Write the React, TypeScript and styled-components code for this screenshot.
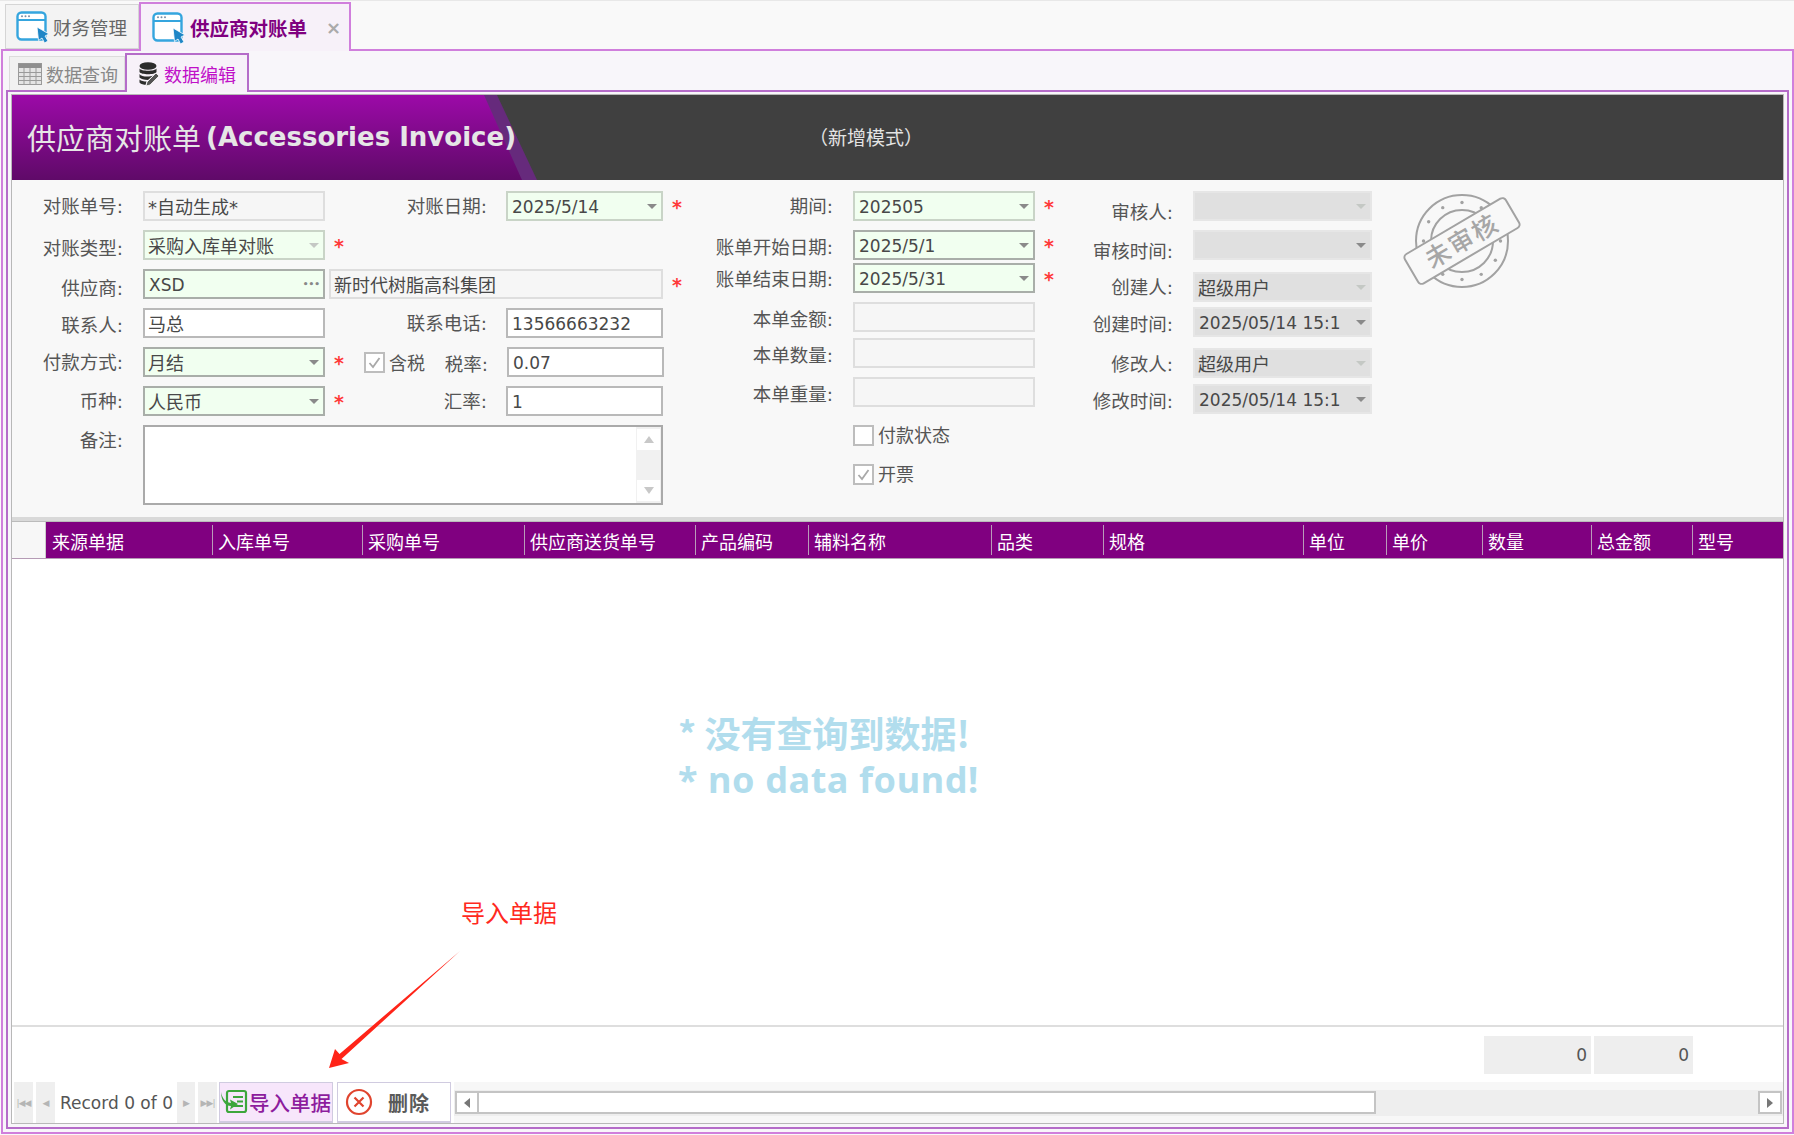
import React from 'react'
import styled, { createGlobalStyle } from 'styled-components'

const FONT = `"DejaVu Sans", "Noto Sans CJK SC", sans-serif`

const GlobalStyle = createGlobalStyle`
    html, body {
        margin: 0;
        padding: 0;
        background: #f9f9f9;
    }
    body {
        font-family: ${FONT};
        color: #444;
    }
    * {
        box-sizing: border-box;
    }
`

const Page = styled.div`
    width: 1794px;
    height: 1135px;
    display: flex;
    flex-direction: column;
    overflow: hidden;
    border-top: 1px solid #e8e8e8;
`

const TopBar = styled.div`
    height: 48px;
    flex: none;
    display: flex;
    align-items: flex-end;
    padding-left: 5px;
`

const TopTab = styled.div<{ $active?: boolean }>`
    display: flex;
    align-items: center;
    height: ${p => (p.$active ? 49 : 45)}px;
    width: ${p => (p.$active ? 212 : 134)}px;
    padding-left: ${p => (p.$active ? 11 : 10)}px;
    margin-bottom: ${p => (p.$active ? -2 : 0)}px;
    background: ${p => (p.$active ? '#f7f1f9' : '#f3f3f3')};
    border: ${p => (p.$active ? '2px solid #d07fdc' : '1px solid #d5d5d5')};
    border-bottom: ${p => (p.$active ? 'none' : '1px solid #d5d5d5')};
    position: relative;
    z-index: 2;
`

const TopTabText = styled.span<{ $active?: boolean }>`
    margin-left: ${p => (p.$active ? 4 : 3)}px;
    font-size: ${p => (p.$active ? 19.5 : 18.5)}px;
    font-weight: ${p => (p.$active ? 700 : 400)};
    color: ${p => (p.$active ? '#800080' : '#666')};
    white-space: nowrap;
`

const CloseMark = styled.span`
    margin-left: 19px;
    font-size: 18px;
    font-weight: 700;
    color: #aaa;
`

const OuterPanel = styled.div`
    flex: 1;
    min-height: 0;
    margin: 0 0 1px 1px;
    padding: 0 3px 3px 3px;
    border: 2px solid #d07fdc;
    display: flex;
    flex-direction: column;
    background: #f8f6fa;
`

const InnerTabs = styled.div`
    height: 39px;
    flex: none;
    display: flex;
    align-items: flex-end;
    padding-left: 3px;
`

const InnerTab = styled.div<{ $active?: boolean }>`
    display: flex;
    align-items: center;
    height: ${p => (p.$active ? 39 : 34)}px;
    width: ${p => (p.$active ? 124 : 116)}px;
    padding-left: ${p => (p.$active ? 11 : 8)}px;
    margin-bottom: ${p => (p.$active ? -2 : 0)}px;
    background: ${p => (p.$active ? '#f7f1f9' : '#f1f1f1')};
    border: ${p => (p.$active ? '2px solid #b56cc9' : '1px solid #dcdcdc')};
    border-bottom: none;
    position: relative;
    z-index: 2;
`

const InnerTabText = styled.span<{ $active?: boolean }>`
    margin-left: ${p => (p.$active ? 5 : 4)}px;
    font-size: 18px;
    color: ${p => (p.$active ? '#c010c8' : '#888')};
    white-space: nowrap;
`

const InnerPanel = styled.div`
    flex: 1;
    min-height: 0;
    padding: 2px 3px 3px 3px;
    border: 2px solid #b56cc9;
    display: flex;
    flex-direction: column;
    background: #f8f6fa;
`

const Frame = styled.div`
    flex: 1;
    min-height: 0;
    border: 1px solid #b8b8b8;
    display: flex;
    flex-direction: column;
    background: #fff;
`

const Banner = styled.div`
    height: 85px;
    flex: none;
    display: flex;
    align-items: center;
    background: #404040;
`

const TitleBlock = styled.div`
    width: 525px;
    height: 100%;
    flex: none;
    padding: 0 0 2px 15px;
    display: flex;
    align-items: center;
    position: relative;

    &::before,
    &::after {
        content: '';
        position: absolute;
        inset: 0;
    }

    &::before {
        background: #662a7c;
        clip-path: polygon(0 0, 485px 0, 100% 100%, 0 100%);
    }

    &::after {
        background: linear-gradient(180deg, #9c0aa8 0%, #5f0a68 100%);
        clip-path: polygon(0 0, 472px 0, 510px 100%, 0 100%);
    }
`

const TitleCn = styled.span`
    position: relative;
    z-index: 1;
    font-family: "Noto Sans CJK SC", sans-serif;
    font-size: 29px;
    color: #e6e6e6;
    white-space: nowrap;
`

const TitleEn = styled.span`
    position: relative;
    z-index: 1;
    margin-left: 5px;
    font-family: "DejaVu Sans", sans-serif;
    font-size: 26px;
    font-weight: 700;
    color: #e6e6e6;
    white-space: nowrap;
`

const ModeText = styled.span`
    margin: 0 0 2px 272px;
    font-family: "Noto Sans CJK SC", sans-serif;
    font-size: 19px;
    color: #e4e4e4;
`

const FormArea = styled.div`
    height: 337px;
    flex: none;
    display: flex;
    padding-top: 11px;
    background: #f8f8f8;
`

const Column = styled.div<{ $w: number }>`
    width: ${p => p.$w}px;
    flex: none;
    display: flex;
    flex-direction: column;
`

const Row = styled.div<{ $top?: number }>`
    display: flex;
    align-items: flex-start;
    height: 30px;
    margin-top: ${p => p.$top ?? 0}px;
`

const MemoRow = styled(Row)`
    height: 80px;
`

const Label = styled.span<{ $w: number; $dy?: number; $gap?: number }>`
    width: ${p => p.$w}px;
    flex: none;
    margin-top: ${p => p.$dy ?? 0}px;
    margin-right: ${p => p.$gap ?? 20}px;
    text-align: right;
    font-size: 18.5px;
    line-height: 32px;
    color: #555;
    white-space: nowrap;
`

const toneStyles = {
    green: { bg: '#f1fff0', border: '#c9d4c7' },
    greenStrong: { bg: '#f1fff0', border: '#a9aea9' },
    read: { bg: '#f6f6f6', border: '#dedede' },
    white: { bg: '#fff', border: '#b9b9b9' },
    gray: { bg: '#e0e0e0', border: '#e6e6e6' },
}

type Tone = keyof typeof toneStyles

const Field = styled.div<{ $w: number; $tone: Tone; $ml?: number }>`
    width: ${p => p.$w}px;
    height: 30px;
    flex: none;
    margin-left: ${p => p.$ml ?? 0}px;
    padding: 0 3px;
    display: flex;
    align-items: center;
    justify-content: space-between;
    background: ${p => toneStyles[p.$tone].bg};
    border: 2px solid ${p => toneStyles[p.$tone].border};
    font-size: 18px;
    color: #484848;
`

const FieldText = styled.span`
    min-width: 0;
    flex: 1;
    overflow: hidden;
    white-space: nowrap;
`

const FieldNum = styled(FieldText)`
    padding: 2px 0 0 1px;
    font-size: 17px;
`

const Arrow = styled.i<{ $pale?: boolean }>`
    width: 0;
    height: 0;
    flex: none;
    margin: 0 1px 0 8px;
    border-left: 5px solid transparent;
    border-right: 5px solid transparent;
    border-top: 5px solid ${p => (p.$pale ? '#c4c8c4' : '#8a8a8a')};
`

const Dots = styled.span`
    flex: none;
    margin-right: 0;
    font-size: 9px;
    font-weight: 700;
    letter-spacing: 0;
    color: #888;
`

const Star = styled.span`
    width: 16px;
    flex: none;
    margin-left: 9px;
    font-size: 19px;
    font-weight: 700;
    line-height: 33px;
    color: #ff3a3a;
`

const Check = styled.span`
    width: 21px;
    height: 21px;
    flex: none;
    display: flex;
    align-items: center;
    justify-content: center;
    background: #fff;
    border: 2px solid #bdbdbd;
`

const InlineCheck = styled(Check)`
    margin: 5px 0 0 14px;
`

const CheckText = styled.span<{ $ml?: number }>`
    flex: none;
    margin-left: ${p => p.$ml ?? 4}px;
    font-size: 18px;
    line-height: 33px;
    color: #555;
`

const CheckRow = styled.div<{ $top: number; $ml: number }>`
    display: flex;
    align-items: center;
    height: 21px;
    margin: ${p => p.$top}px 0 0 ${p => p.$ml}px;
`

const Memo = styled.div`
    width: 520px;
    height: 80px;
    flex: none;
    display: flex;
    justify-content: flex-end;
    background: #fff;
    border: 2px solid #aaa;
`

const MemoScroll = styled.div`
    width: 25px;
    display: flex;
    flex-direction: column;
    justify-content: space-between;
    background: #f1f1f1;
    padding: 2px 1px;
`

const MemoScrollBtn = styled.div`
    height: 21px;
    display: flex;
    align-items: center;
    justify-content: center;
    background: #fff;
`

const TriUp = styled.i<{ $down?: boolean }>`
    width: 0;
    height: 0;
    border-left: 5px solid transparent;
    border-right: 5px solid transparent;
    border-bottom: ${p => (p.$down ? 'none' : '7px solid #c8c8c8')};
    border-top: ${p => (p.$down ? '7px solid #c8c8c8' : 'none')};
`

const StampBox = styled.div`
    width: 122px;
    height: 104px;
    flex: none;
    margin: -2px 0 0 30px;
`

const Separator = styled.div`
    height: 4px;
    flex: none;
    background: #d9d9d9;
`

const GridHead = styled.div`
    height: 38px;
    flex: none;
    display: flex;
    align-items: center;
    background: #800080;
    border-top: 1px solid #bbb;
    border-bottom: 1px solid #b59bb5;
`

const RowIndicator = styled.div`
    width: 34px;
    height: 100%;
    flex: none;
    background: #f7f7f7;
    border-right: 1px solid #ccc;
`

const HeadCell = styled.div<{ $w: number; $first?: boolean }>`
    width: ${p => p.$w}px;
    height: 30px;
    flex: none;
    padding: 3px 0 0 ${p => (p.$first ? 6 : 5)}px;
    border-left: ${p => (p.$first ? 'none' : '1px solid #b99bb9')};
    font-size: 18px;
    line-height: 30px;
    color: #fff;
    white-space: nowrap;
`

const GridBody = styled.div`
    flex: 1;
    min-height: 0;
    padding: 149px 0 0 666px;
    background: #fff;
`

const NoData = styled.div`
    font-family: "Noto Sans CJK SC", sans-serif;
    font-size: 36px;
    font-weight: 700;
    line-height: 48px;
    color: #b1dded;
    white-space: pre;
`

const NoDataEn = styled(NoData)`
    font-family: "Noto Sans", "Noto Sans CJK SC", sans-serif;
    letter-spacing: 0.6px;
`

const Totals = styled.div`
    height: 57px;
    flex: none;
    display: flex;
    justify-content: flex-end;
    gap: 3px;
    padding: 9px 90px 0 0;
    border-top: 2px solid #dedede;
    background: #fff;
`

const TotalBox = styled.div<{ $w: number }>`
    width: ${p => p.$w}px;
    height: 38px;
    padding-right: 4px;
    background: #eee;
    text-align: right;
    font-size: 17px;
    line-height: 38px;
    color: #555;
`

const Navigator = styled.div`
    height: 41px;
    flex: none;
    display: flex;
    align-items: stretch;
    padding-left: 2px;
    background: #fff;
`

const NavBtn = styled.div<{ $w: number; $ml?: number }>`
    width: ${p => p.$w}px;
    flex: none;
    margin-left: ${p => p.$ml ?? 0}px;
    display: flex;
    align-items: center;
    justify-content: center;
    background: #efefef;
    color: #b5b5b5;
    font-size: 9px;
    letter-spacing: -1px;
`

const RecordText = styled.span`
    width: 122px;
    flex: none;
    padding: 1px 0 0 5px;
    font-size: 17px;
    line-height: 41px;
    color: #555;
    white-space: nowrap;
`

const ActionBtn = styled.div<{ $primary?: boolean; $w: number }>`
    width: ${p => p.$w}px;
    flex: none;
    margin-left: ${p => (p.$primary ? 2 : 4)}px;
    padding-left: ${p => (p.$primary ? 0 : 7)}px;
    display: flex;
    align-items: center;
    background: ${p => (p.$primary ? '#f7e6fb' : '#fff')};
    border: 1px solid #d0cbe0;
    border-bottom-width: 2px;
`

const ActionText = styled.span<{ $primary?: boolean }>`
    margin-left: ${p => (p.$primary ? 1 : 15)}px;
    font-family: "Noto Sans CJK SC", sans-serif;
    font-size: ${p => (p.$primary ? 20.5 : 20)}px;
    font-weight: ${p => (p.$primary ? 500 : 700)};
    letter-spacing: ${p => (p.$primary ? 0 : 1)}px;
    color: ${p => (p.$primary ? '#8d1c9d' : '#5a5a5a')};
    white-space: nowrap;
`

const ScrollArea = styled.div`
    flex: 1;
    min-width: 0;
    margin-left: 3px;
    display: flex;
    align-items: center;
    background: #f7f7f7;
`

const ScrollTrack = styled.div`
    flex: 1;
    height: 26px;
    display: flex;
    align-items: center;
    padding: 0 1px;
    background: #eee;
`

const ScrollBtn = styled.div<{ $mlAuto?: boolean }>`
    width: 24px;
    height: 23px;
    flex: none;
    margin-left: ${p => (p.$mlAuto ? 'auto' : 0)};
    display: flex;
    align-items: center;
    justify-content: center;
    background: #fff;
    border: 2px solid #c4c4c4;
`

const ScrollThumb = styled.div`
    width: 897px;
    height: 23px;
    flex: none;
    background: #fff;
    border: 2px solid #c4c4c4;
    border-left: none;
`

const TriSide = styled.i<{ $right?: boolean }>`
    width: 0;
    height: 0;
    border-top: 5px solid transparent;
    border-bottom: 5px solid transparent;
    border-right: ${p => (p.$right ? 'none' : '6px solid #777')};
    border-left: ${p => (p.$right ? '6px solid #777' : 'none')};
`

// callout drawn over the page by hand in the screenshot
const CalloutText = styled.div`
    position: absolute;
    left: 461px;
    top: 896px;
    font-family: "Noto Sans CJK SC", sans-serif;
    font-size: 24px;
    line-height: 32px;
    color: #ff2a1e;
`

const CalloutArrow = styled.svg`
    position: absolute;
    left: 320px;
    top: 945px;
`

const WindowIcon = () => (
    <svg width="34" height="32" viewBox="0 0 34 32">
        <rect x="1.5" y="1.5" width="28" height="27" rx="4" fill="#fff" stroke="#35a5de" strokeWidth="2.4" />
        <line x1="2" y1="9" x2="29" y2="9" stroke="#35a5de" strokeWidth="2" />
        <circle cx="6" cy="5.2" r="1" fill="#7a8fa8" />
        <circle cx="9.5" cy="5.2" r="1" fill="#7a8fa8" />
        <circle cx="13" cy="5.2" r="1" fill="#7a8fa8" />
        <path d="M21 16 L33 23 L29 25 L32 30 L28.5 32 L26 27 L22.5 29.5 Z" fill="#1f86c6" stroke="#fff" strokeWidth="0.8" />
    </svg>
)

const TableIcon = () => (
    <svg width="24" height="22" viewBox="0 0 24 22">
        <rect x="0.5" y="0.5" width="23" height="21" fill="#e4e4e4" stroke="#9a9a9a" />
        <rect x="0.5" y="0.5" width="23" height="4.5" fill="#8f8f8f" />
        <path d="M0 9.5H24M0 13.5H24M0 17.5H24M6 5V22M12 5V22M18 5V22" stroke="#9a9a9a" strokeWidth="1" />
    </svg>
)

const DbEditIcon = () => (
    <svg width="21" height="24" viewBox="0 0 21 24">
        <ellipse cx="10" cy="4" rx="8.5" ry="3.8" fill="#2c2c2c" />
        <path d="M1.5 6.5C3 9.5 17 9.5 18.5 6.5V10C17 13 3 13 1.5 10Z" fill="#2c2c2c" />
        <path d="M1.5 12C3 15 12 15.3 15 13.5L10 18C6 18 3 17 1.5 15.5Z" fill="#2c2c2c" />
        <path d="M1.5 17.5C3 19 6 19.6 8.5 19.6L7.5 23C4.5 22.6 2 21.5 1.5 20.5Z" fill="#2c2c2c" />
        <path d="M18 11L21 14L12 23L8 24L9 20Z" fill="#555" stroke="#fff" strokeWidth="0.8" />
    </svg>
)

const TickIcon = () => (
    <svg width="15" height="15" viewBox="0 0 15 15">
        <path d="M2.5 8L6 12L12.5 3" fill="none" stroke="#a9a9a9" strokeWidth="1.8" />
    </svg>
)

const StampIcon = () => (
    <svg width="122" height="104" viewBox="0 0 122 104">
        <circle cx="60" cy="52" r="46" fill="none" stroke="#a2a2a2" strokeWidth="2" />
        <circle cx="60" cy="52" r="31" fill="none" stroke="#a2a2a2" strokeWidth="2" />
        {[0, 30, 60, 90, 120, 150, 180, 210, 240, 270, 300, 330].map(a => (
            <circle
                key={a}
                cx={60 + 38.5 * Math.cos((a * Math.PI) / 180)}
                cy={52 + 38.5 * Math.sin((a * Math.PI) / 180)}
                r="1.7"
                fill="#a2a2a2"
            />
        ))}
        <g transform="rotate(-30.5 60 52)">
            <rect x="1.5" y="35" width="117" height="34" rx="4" fill="#f8f8f8" stroke="#a2a2a2" strokeWidth="2" />
            <text
                x="60"
                y="61"
                textAnchor="middle"
                fontSize="25"
                fontWeight="500"
                letterSpacing="2"
                fill="#a6a6a6"
                fontFamily="Noto Sans CJK SC, sans-serif"
            >
                未审核
            </text>
        </g>
    </svg>
)

const ImportIcon = () => (
    <svg width="28" height="26" viewBox="0 0 28 26">
        <rect x="7" y="2" width="19" height="21" rx="2" fill="none" stroke="#3da63c" strokeWidth="2.2" />
        <path d="M13 8H23M17 12.5H23M13 17H23" stroke="#3da63c" strokeWidth="1.8" />
        <path d="M1 3C2 9 5 13 11 14L10 10.5L18 15L10 20.5L11 17C5 17 1 11 1 3Z" fill="#3da63c" />
    </svg>
)

const DeleteIcon = () => (
    <svg width="28" height="28" viewBox="0 0 28 28">
        <circle cx="14" cy="14" r="12" fill="#fff" stroke="#e0442e" strokeWidth="2.2" />
        <path d="M9.5 9.5L18.5 18.5M18.5 9.5L9.5 18.5" stroke="#e0442e" strokeWidth="2.2" />
    </svg>
)

const columns = [
    { title: '来源单据', width: 166 },
    { title: '入库单号', width: 150 },
    { title: '采购单号', width: 162 },
    { title: '供应商送货单号', width: 171 },
    { title: '产品编码', width: 113 },
    { title: '辅料名称', width: 183 },
    { title: '品类', width: 112 },
    { title: '规格', width: 200 },
    { title: '单位', width: 83 },
    { title: '单价', width: 96 },
    { title: '数量', width: 109 },
    { title: '总金额', width: 101 },
    { title: '型号', width: 91 },
]

export default function App() {
    return (
        <Page>
            <GlobalStyle />
            <TopBar>
                <TopTab>
                    <WindowIcon />
                    <TopTabText>财务管理</TopTabText>
                </TopTab>
                <TopTab $active>
                    <WindowIcon />
                    <TopTabText $active>供应商对账单</TopTabText>
                    <CloseMark>×</CloseMark>
                </TopTab>
            </TopBar>

            <OuterPanel>
                <InnerTabs>
                    <InnerTab>
                        <TableIcon />
                        <InnerTabText>数据查询</InnerTabText>
                    </InnerTab>
                    <InnerTab $active>
                        <DbEditIcon />
                        <InnerTabText $active>数据编辑</InnerTabText>
                    </InnerTab>
                </InnerTabs>

                <InnerPanel>
                    <Frame>
                        <Banner>
                            <TitleBlock>
                                <TitleCn>供应商对账单</TitleCn>
                                <TitleEn>(Accessories Invoice)</TitleEn>
                            </TitleBlock>
                            <ModeText>（新增模式）</ModeText>
                        </Banner>

                        <FormArea>
                            <Column $w={678}>
                                <Row>
                                    <Label $w={111}>对账单号:</Label>
                                    <Field $w={182} $tone="read"><FieldText>*自动生成*</FieldText></Field>
                                    <Label $w={162} $gap={19}>对账日期:</Label>
                                    <Field $w={157} $tone="green">
                                        <FieldNum>2025/5/14</FieldNum>
                                        <Arrow />
                                    </Field>
                                    <Star>*</Star>
                                </Row>
                                <Row $top={9}>
                                    <Label $w={111} $dy={3}>对账类型:</Label>
                                    <Field $w={182} $tone="green">
                                        <FieldText>采购入库单对账</FieldText>
                                        <Arrow $pale />
                                    </Field>
                                    <Star>*</Star>
                                </Row>
                                <Row $top={9}>
                                    <Label $w={111} $dy={4}>供应商:</Label>
                                    <Field $w={182} $tone="greenStrong">
                                        <FieldNum>XSD</FieldNum>
                                        <Dots>•••</Dots>
                                    </Field>
                                    <Field $w={334} $ml={4} $tone="read"><FieldText>新时代树脂高科集团</FieldText></Field>
                                    <Star>*</Star>
                                </Row>
                                <Row $top={9}>
                                    <Label $w={111} $dy={2}>联系人:</Label>
                                    <Field $w={182} $tone="white"><FieldText>马总</FieldText></Field>
                                    <Label $w={162} $gap={19}>联系电话:</Label>
                                    <Field $w={157} $tone="white"><FieldNum>13566663232</FieldNum></Field>
                                </Row>
                                <Row $top={9}>
                                    <Label $w={111}>付款方式:</Label>
                                    <Field $w={182} $tone="greenStrong">
                                        <FieldText>月结</FieldText>
                                        <Arrow />
                                    </Field>
                                    <Star>*</Star>
                                    <InlineCheck><TickIcon /></InlineCheck>
                                    <CheckText>含税</CheckText>
                                    <Label $w={63} $dy={2} $gap={19}>税率:</Label>
                                    <Field $w={157} $tone="white"><FieldNum>0.07</FieldNum></Field>
                                </Row>
                                <Row $top={9}>
                                    <Label $w={111}>币种:</Label>
                                    <Field $w={182} $tone="greenStrong">
                                        <FieldText>人民币</FieldText>
                                        <Arrow />
                                    </Field>
                                    <Star>*</Star>
                                    <Label $w={137} $gap={19}>汇率:</Label>
                                    <Field $w={157} $tone="white"><FieldNum>1</FieldNum></Field>
                                </Row>
                                <MemoRow $top={9}>
                                    <Label $w={111}>备注:</Label>
                                    <Memo>
                                        <MemoScroll>
                                            <MemoScrollBtn><TriUp /></MemoScrollBtn>
                                            <MemoScrollBtn><TriUp $down /></MemoScrollBtn>
                                        </MemoScroll>
                                    </Memo>
                                </MemoRow>
                            </Column>

                            <Column $w={370}>
                                <Row>
                                    <Label $w={143}>期间:</Label>
                                    <Field $w={182} $tone="green">
                                        <FieldNum>202505</FieldNum>
                                        <Arrow />
                                    </Field>
                                    <Star>*</Star>
                                </Row>
                                <Row $top={9}>
                                    <Label $w={143} $dy={2}>账单开始日期:</Label>
                                    <Field $w={182} $tone="greenStrong">
                                        <FieldNum>2025/5/1</FieldNum>
                                        <Arrow />
                                    </Field>
                                    <Star>*</Star>
                                </Row>
                                <Row $top={3}>
                                    <Label $w={143} $dy={1}>账单结束日期:</Label>
                                    <Field $w={182} $tone="greenStrong">
                                        <FieldNum>2025/5/31</FieldNum>
                                        <Arrow />
                                    </Field>
                                    <Star>*</Star>
                                </Row>
                                <Row $top={9}>
                                    <Label $w={143} $dy={2}>本单金额:</Label>
                                    <Field $w={182} $tone="read" />
                                </Row>
                                <Row $top={6}>
                                    <Label $w={143} $dy={2}>本单数量:</Label>
                                    <Field $w={182} $tone="read" />
                                </Row>
                                <Row $top={9}>
                                    <Label $w={143} $dy={2}>本单重量:</Label>
                                    <Field $w={182} $tone="read" />
                                </Row>
                                <CheckRow $top={18} $ml={163}>
                                    <Check />
                                    <CheckText $ml={4}>付款状态</CheckText>
                                </CheckRow>
                                <CheckRow $top={18} $ml={163}>
                                    <Check><TickIcon /></Check>
                                    <CheckText $ml={4}>开票</CheckText>
                                </CheckRow>
                            </Column>

                            <Column $w={312}>
                                <Row>
                                    <Label $w={113} $dy={6}>审核人:</Label>
                                    <Field $w={179} $tone="gray"><FieldText /><Arrow $pale /></Field>
                                </Row>
                                <Row $top={9}>
                                    <Label $w={113} $dy={6}>审核时间:</Label>
                                    <Field $w={179} $tone="gray"><FieldText /><Arrow /></Field>
                                </Row>
                                <Row $top={12}>
                                    <Label $w={113}>创建人:</Label>
                                    <Field $w={179} $tone="gray">
                                        <FieldText>超级用户</FieldText>
                                        <Arrow $pale />
                                    </Field>
                                </Row>
                                <Row $top={5}>
                                    <Label $w={113} $dy={2}>创建时间:</Label>
                                    <Field $w={179} $tone="gray">
                                        <FieldNum>2025/05/14 15:1</FieldNum>
                                        <Arrow />
                                    </Field>
                                </Row>
                                <Row $top={11}>
                                    <Label $w={113} $dy={1}>修改人:</Label>
                                    <Field $w={179} $tone="gray">
                                        <FieldText>超级用户</FieldText>
                                        <Arrow $pale />
                                    </Field>
                                </Row>
                                <Row $top={6}>
                                    <Label $w={113} $dy={2}>修改时间:</Label>
                                    <Field $w={179} $tone="gray">
                                        <FieldNum>2025/05/14 15:1</FieldNum>
                                        <Arrow />
                                    </Field>
                                </Row>
                            </Column>

                            <StampBox><StampIcon /></StampBox>
                        </FormArea>

                        <Separator />

                        <GridHead>
                            <RowIndicator />
                            {columns.map((c, i) => (
                                <HeadCell key={c.title} $w={c.width} $first={i === 0}>{c.title}</HeadCell>
                            ))}
                        </GridHead>

                        <GridBody>
                            <NoData>{'* 没有查询到数据!'}</NoData>
                            <NoDataEn>{'* no data found!'}</NoDataEn>
                        </GridBody>

                        <Totals>
                            <TotalBox $w={107}>0</TotalBox>
                            <TotalBox $w={99}>0</TotalBox>
                        </Totals>

                        <Navigator>
                            <NavBtn $w={19}>|◀◀</NavBtn>
                            <NavBtn $w={19} $ml={3}>◀</NavBtn>
                            <RecordText>Record 0 of 0</RecordText>
                            <NavBtn $w={18}>▶</NavBtn>
                            <NavBtn $w={19} $ml={3}>▶▶|</NavBtn>
                            <ActionBtn $primary $w={114}>
                                <ImportIcon />
                                <ActionText $primary>导入单据</ActionText>
                            </ActionBtn>
                            <ActionBtn $w={114}>
                                <DeleteIcon />
                                <ActionText>删除</ActionText>
                            </ActionBtn>
                            <ScrollArea>
                                <ScrollTrack>
                                    <ScrollBtn><TriSide /></ScrollBtn>
                                    <ScrollThumb />
                                    <ScrollBtn $mlAuto><TriSide $right /></ScrollBtn>
                                </ScrollTrack>
                            </ScrollArea>
                        </Navigator>
                    </Frame>
                </InnerPanel>
            </OuterPanel>

            <CalloutText>导入单据</CalloutText>
            <CalloutArrow width="150" height="130" viewBox="320 945 150 130">
                <path d="M460 951 L339.5 1054 L335 1049 L329 1068 L349 1063 L341.5 1059 Z" fill="#ff2418" />
            </CalloutArrow>
        </Page>
    )
}
